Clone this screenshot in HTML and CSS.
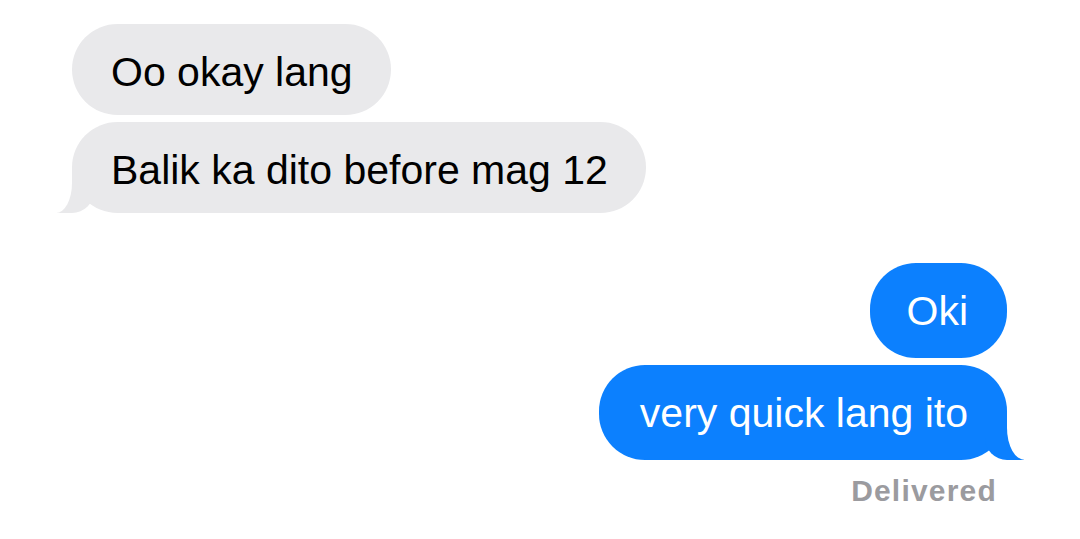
FILE: index.html
```html
<!DOCTYPE html>
<html lang="en">
<head>
  <meta charset="UTF-8">
  <meta name="viewport" content="width=device-width, initial-scale=1.0">
  <title>Messages</title>
  <link rel="stylesheet" href="styles.css">
</head>
<body>
    <div id="thread">
        <div class="group group-in">
            <div class="bubble in">Oo okay lang</div>
            <div class="bubble in tail">Balik ka dito before mag 12</div>
        </div>

        <div class="group group-out">
            <div class="bubble out">Oki</div>
            <div class="bubble out tail">very quick lang ito</div>
            <div class="status">Delivered</div>
        </div>
    </div>
</body>
</html>
```

FILE: styles.css
```css
body {
    margin: 0;
    background-color: #fff;
    font-family: "Liberation Sans", Arial, sans-serif;
}

#thread {
    display: flex;
    flex-direction: column;
    padding: 24px 73px 0 72px;
}

.group {
    display: flex;
    flex-direction: column;
    gap: 7px;
}

.group-in {
    align-items: flex-start;
}

.group-out {
    align-items: flex-end;
    margin-top: 50px;
}

.bubble {
    position: relative;
    font-size: 41px;
    line-height: 49px;
    border-radius: 46px;
    white-space: nowrap;
}

.in {
    background-color: #e9e9eb;
    color: #000;
    padding: 24px 38px 18px 39px;
}

.out {
    background-color: #0c80fe;
    color: #fff;
    padding: 24px 39px 22px 37px;
}

/* tail of the last bubble in a group */
.tail::before,
.tail::after {
    content: "";
    position: absolute;
    bottom: 0;
}

.in.tail::before {
    left: -15px;
    width: 37px;
    height: 46px;
    background-color: #e9e9eb;
    border-bottom-right-radius: 22px;
}

.in.tail::after {
    left: -16px;
    width: 16px;
    height: 46px;
    background-color: #fff;
    border-bottom-right-radius: 16px 30px;
}

.out.tail {
    padding-left: 41px;
}

.out.tail::before {
    right: -17px;
    width: 39px;
    height: 46px;
    background-color: #0c80fe;
    border-bottom-left-radius: 22px;
}

.out.tail::after {
    right: -18px;
    width: 18px;
    height: 46px;
    background-color: #fff;
    border-bottom-left-radius: 18px 32px;
}

.status {
    margin-top: 7px;
    margin-right: 10px;
    font-size: 30px;
    font-weight: bold;
    letter-spacing: 1.2px;
    line-height: 34px;
    color: #9b9b9f;
}
```
